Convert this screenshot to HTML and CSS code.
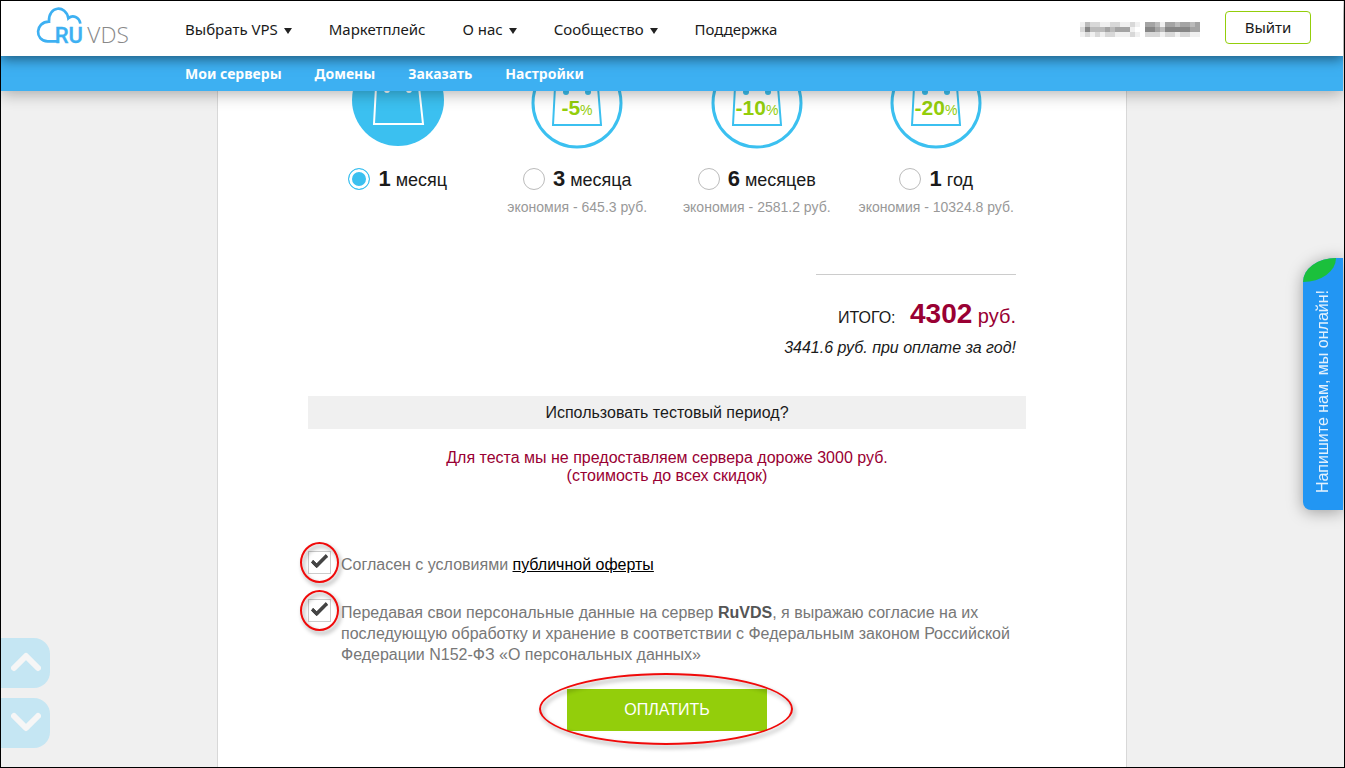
FILE: index.html
```html
<!DOCTYPE html>
<html lang="ru">
<head>
    <meta charset="UTF-8">
    <meta name="viewport" content="width=device-width, initial-scale=1.0">
    <title>RuVDS</title>
    <link rel="stylesheet" href="styles.css">
</head>
<body>

<header class="header">
    <a class="logo" href="#" aria-label="RuVDS">
        <svg width="95" height="50" viewBox="111 0 285 150">
            <path d="M172 121H143C103 120 105 62 147 62C144 14 198 10 205 52C218 40 238 48 241 68" fill="none" stroke="#3db0f2" stroke-width="8"/>
            <text class="logo-ru" x="164" y="125">RU</text>
            <text class="logo-vds" x="262" y="125">VDS</text>
        </svg>
    </a>
    <nav class="main-nav">
        <a class="drop" href="#">Выбрать VPS</a>
        <a href="#">Маркетплейс</a>
        <a class="drop" href="#">О нас</a>
        <a class="drop" href="#">Сообщество</a>
        <a href="#">Поддержка</a>
    </nav>
    <!-- скрытый баланс -->
    <svg class="balance" width="120" height="15" viewBox="0 0 24 3" shape-rendering="crispEdges">
        <path fill="#f0f0f0" d="M0 0h1v1h-1zM4 0h6v1h-6zM11 0h1v1h-1zM16 0h1v1h-1zM10 1h1v1h-1zM0 2h1v1h-1zM2 2h1v1h-1zM4 2h1v1h-1zM7 2h3v1h-3zM11 2h1v1h-1zM16 2h1v1h-1zM19 2h1v1h-1zM22 2h2v1h-2z"/>
        <path fill="#d8d8d8" d="M2 0h2v1h-2zM6 0h2v1h-2zM10 0h1v1h-1zM0 1h1v1h-1zM1 2h1v1h-1zM3 2h1v1h-1zM5 2h2v1h-2zM10 2h1v1h-1zM13 2h3v1h-3zM17 2h2v1h-2zM20 2h2v1h-2z"/>
        <path fill="#bbb" d="M1 0h1v1h-1zM15 0h1v1h-1zM19 0h1v1h-1zM22 0h1v1h-1zM2 1h3v1h-3zM6 1h1v1h-1zM16 1h1v1h-1z"/>
        <path fill="#a4a4a4" d="M13 0h2v1h-2zM17 0h2v1h-2zM20 0h2v1h-2zM23 0h1v1h-1zM5 1h1v1h-1zM7 1h3v1h-3zM15 1h1v1h-1zM22 1h2v1h-2z"/>
        <path fill="#868686" d="M1 1h1v1h-1zM13 1h2v1h-2zM17 1h5v1h-5z"/>
    </svg>
    <button class="logout" type="button">Выйти</button>
</header>

<nav class="sub-nav">
    <a href="#">Мои серверы</a>
    <a href="#">Домены</a>
    <a href="#">Заказать</a>
    <a href="#">Настройки</a>
</nav>

<main class="panel">
    <form>
        <!-- период оплаты -->
        <div class="plans">
            <div class="plan">
                <svg width="96" height="60" viewBox="0 0 96 60">
                    <circle cx="48" cy="9" r="46" fill="#3bc0f0"/>
                    <path d="M26 -4L24 33H73L69 -4" fill="none" stroke="#fff" stroke-width="2"/>
                    <circle cx="37" cy="-1" r="3" fill="#fff"/>
                    <circle cx="59" cy="-1" r="3" fill="#fff"/>
                </svg>
                <label class="period"><input type="radio" name="period" checked><span><b>1</b> месяц</span></label>
            </div>
            <div class="plan">
                <svg width="96" height="60" viewBox="0 0 96 60">
                    <circle cx="48" cy="12" r="44" fill="none" stroke="#3bc0f0" stroke-width="3"/>
                    <path d="M26 -4L24 34H72L69 -4" fill="none" stroke="#3bc0f0" stroke-width="2"/>
                    <circle cx="37" cy="1" r="3" fill="#3bc0f0"/>
                    <circle cx="59" cy="1" r="3" fill="#3bc0f0"/>
                    <text class="discount" x="48" y="24">-5<tspan class="percent">%</tspan></text>
                </svg>
                <label class="period"><input type="radio" name="period"><span><b>3</b> месяца</span></label>
                <div class="saving">экономия - 645.3 руб.</div>
            </div>
            <div class="plan">
                <svg width="96" height="60" viewBox="0 0 96 60">
                    <circle cx="48" cy="12" r="44" fill="none" stroke="#3bc0f0" stroke-width="3"/>
                    <path d="M26 -4L24 34H72L69 -4" fill="none" stroke="#3bc0f0" stroke-width="2"/>
                    <circle cx="37" cy="1" r="3" fill="#3bc0f0"/>
                    <circle cx="59" cy="1" r="3" fill="#3bc0f0"/>
                    <text class="discount" x="48" y="24">-10<tspan class="percent">%</tspan></text>
                </svg>
                <label class="period"><input type="radio" name="period"><span><b>6</b> месяцев</span></label>
                <div class="saving">экономия - 2581.2 руб.</div>
            </div>
            <div class="plan">
                <svg width="96" height="60" viewBox="0 0 96 60">
                    <circle cx="48" cy="12" r="44" fill="none" stroke="#3bc0f0" stroke-width="3"/>
                    <path d="M26 -4L24 34H72L69 -4" fill="none" stroke="#3bc0f0" stroke-width="2"/>
                    <circle cx="37" cy="1" r="3" fill="#3bc0f0"/>
                    <circle cx="59" cy="1" r="3" fill="#3bc0f0"/>
                    <text class="discount" x="48" y="24">-20<tspan class="percent">%</tspan></text>
                </svg>
                <label class="period"><input type="radio" name="period"><span><b>1</b> год</span></label>
                <div class="saving">экономия - 10324.8 руб.</div>
            </div>
        </div>

        <!-- итог -->
        <div class="total">
            <div class="sum">ИТОГО: <span class="price"><b>4302</b> руб.</span></div>
            <div class="year">3441.6 руб. при оплате за год!</div>
        </div>

        <div class="test-title">Использовать тестовый период?</div>
        <p class="test-note">Для теста мы не предоставляем сервера дороже 3000 руб.<br>(стоимость до всех скидок)</p>

        <!-- согласие -->
        <div class="agree">
            <span class="mark"><input type="checkbox" id="offer" checked></span>
            <label for="offer">Согласен с условиями <a href="#">публичной оферты</a></label>
        </div>
        <div class="agree">
            <span class="mark"><input type="checkbox" id="personal" checked></span>
            <label for="personal">Передавая свои персональные данные на сервер <b>RuVDS</b>, я выражаю согласие на их последующую обработку и хранение в соответствии с Федеральным законом Российской Федерации N152-ФЗ «О персональных данных»</label>
        </div>

        <div class="pay"><button type="button">ОПЛАТИТЬ</button></div>
    </form>
</main>

<button class="chat" type="button"><span>Напишите нам, мы онлайн!</span></button>

<div class="scroll">
    <button type="button" aria-label="Вверх">
        <svg width="30" height="20" viewBox="0 0 30 20"><path d="M3 16L15 4L27 16"/></svg>
    </button>
    <button type="button" aria-label="Вниз">
        <svg width="30" height="20" viewBox="0 0 30 20"><path d="M3 4L15 16L27 4"/></svg>
    </button>
</div>

</body>
</html>
```
FILE: styles.css
```css
* {
    box-sizing: border-box;
}
body {
    margin: 0;
    min-height: 100vh;
    display: flex;
    flex-direction: column;
    position: relative;
    padding-right: 1px;
    border: 1px solid #000;
    background-color: #f0f0f0;
    font-family: "Liberation Sans", Arial, sans-serif;
    font-size: 16px;
    color: #1a1a1a;
}
button {
    border: none;
    padding: 0;
    font-family: inherit;
    cursor: pointer;
}

/* header */
.header {
    display: flex;
    align-items: center;
    height: 55px;
    padding: 0 32px 0 36px;
    background-color: #fff;
    box-shadow: 0 3px 12px rgba(0, 0, 0, 0.5);
    z-index: 3;
    font-family: "Noto Sans", sans-serif;
}
.logo {
    width: 148px;
    height: 50px;
    margin-bottom: 6px;
}
.logo svg {
    display: block;
    overflow: visible;
}
.logo-ru {
    font: 500 66px Roboto, sans-serif;
    fill: #3db0f2;
    stroke: #3db0f2;
    stroke-width: 1px;
}
.logo-vds {
    font: 300 68px "Open Sans", sans-serif;
    fill: #888;
}
.main-nav {
    display: flex;
    gap: 37px;
    flex: 1;
}
.main-nav a {
    font-size: 15px;
    color: #1a1a1a;
    text-decoration: none;
}
.drop::after {
    content: "";
    display: inline-block;
    margin-left: 6px;
    vertical-align: 1px;
    border: 4px solid transparent;
    border-top: 6px solid #222;
    border-bottom: none;
}
.balance {
    margin: 2px 25px 0 0;
}
.logout {
    width: 86px;
    height: 33px;
    margin-bottom: 2px;
    padding-bottom: 2px;
    background-color: #fff;
    border: 1px solid #93ce0b;
    border-radius: 4px;
    font-size: 15px;
    color: #1a1a1a;
}
.sub-nav {
    display: flex;
    align-items: center;
    gap: 33px;
    height: 35px;
    padding-left: 184px;
    background-color: #3db0f2;
    box-shadow: 0 3px 16px rgba(0, 0, 0, 0.3);
    z-index: 2;
}
.sub-nav a {
    font: bold 14px "Noto Sans", sans-serif;
    color: #fff;
    text-decoration: none;
}

/* panel */
.panel {
    flex: 1;
    width: 100%;
    max-width: 910px;
    margin: 0 auto;
    padding: 0 100px 20px 90px;
    background-color: #fff;
    border: 1px solid #d8d8d8;
    border-width: 0 1px;
}
.plans {
    display: grid;
    grid-template-columns: repeat(4, 1fr);
    text-align: center;
}
.plan svg {
    display: block;
    margin: 0 auto 12px;
}
.discount {
    font-size: 21px;
    font-weight: bold;
    text-anchor: middle;
    fill: #93ce0b;
}
.percent {
    font-size: 14px;
    font-weight: normal;
}
.period {
    display: flex;
    justify-content: center;
    align-items: center;
    gap: 8px;
    height: 32px;
    font-size: 18px;
}
.period b {
    font-size: 22px;
}
.period input {
    appearance: none;
    width: 22px;
    height: 22px;
    margin: 0;
    border: 1px solid #bbb;
    border-radius: 50%;
}
.period input:checked {
    border-color: #3bc0f0;
    background-color: #3bc0f0;
    box-shadow: inset 0 0 0 3px #fff;
}
.saving {
    margin-top: 2px;
    font-size: 14px;
    line-height: 20px;
    color: #999;
    white-space: nowrap;
}

/* total */
.total {
    width: fit-content;
    margin: 57px 10px 38px auto;
    text-align: right;
}
.total::before {
    content: "";
    display: block;
    width: 200px;
    margin: 0 0 23px auto;
    border-top: 1px solid #ccc;
}
.sum {
    line-height: 32px;
}
.price {
    margin-left: 10px;
    font-size: 20px;
    color: #990033;
}
.price b {
    font-size: 28px;
}
.year {
    margin-top: 4px;
    line-height: 20px;
    font-style: italic;
}
.test-title {
    background-color: #f0f0f0;
    line-height: 33px;
    text-align: center;
}
.test-note {
    margin: 20px 0 66px;
    line-height: 18px;
    text-align: center;
    color: #990033;
}

/* agreement */
.agree {
    display: flex;
    align-items: flex-start;
    gap: 10px;
    margin-bottom: 24px;
    line-height: 21px;
    color: #777;
}
.agree label {
    max-width: 670px;
    padding-top: 3px;
}
.agree a {
    color: #000;
}
.agree b {
    color: #555;
}
.mark {
    position: relative;
    height: 23px;
}
.mark input {
    appearance: none;
    display: block;
    width: 23px;
    height: 23px;
    margin: 0;
    border: 1px solid #ccc;
}
.mark input:checked::after {
    content: "";
    display: block;
    box-sizing: border-box;
    width: 9px;
    height: 17px;
    margin: -1px 0 0 6px;
    border: solid #444;
    border-width: 0 4px 4px 0;
    border-radius: 2px;
    transform: rotate(45deg);
}
/* red outlines */
.mark::after,
.pay::after {
    content: "";
    position: absolute;
    inset: -9px -8px;
    border: 2px solid #f00a0a;
    border-radius: 50%;
    filter: drop-shadow(2px 3px 2px rgba(0, 0, 0, 0.4));
    pointer-events: none;
}
.pay {
    position: relative;
    width: 200px;
    margin: 0 auto;
}
.pay::after {
    inset: -16px -26px -14px -28px;
}
.pay button {
    display: block;
    width: 100%;
    height: 42px;
    background-color: #93ce0b;
    font-size: 16px;
    color: #fff;
}

/* side widgets */
.chat {
    position: absolute;
    top: 257px;
    right: 1px;
    width: 40px;
    height: 252px;
    background-color: #2296f3;
    border-radius: 33px 0 0 8px / 24px 0 0 8px;
    box-shadow: 0 2px 16px rgba(0, 0, 0, 0.35);
    font-size: 16px;
    color: #e4f1fd;
}
.chat::before {
    content: "";
    position: absolute;
    top: 0;
    left: 0;
    width: 33px;
    height: 24px;
    background-color: #1bc03c;
    border-radius: 100% 0;
}
.chat span {
    display: inline-block;
    padding-bottom: 20px;
    writing-mode: vertical-rl;
    transform: rotate(180deg);
}
.scroll {
    position: absolute;
    left: 0;
    bottom: 19px;
    display: grid;
    gap: 10px;
}
.scroll button {
    width: 49px;
    height: 50px;
    background-color: #c5e6f3;
    border-radius: 0 16px 16px 0;
}
.scroll path {
    fill: none;
    stroke: #f6f6f6;
    stroke-width: 6;
    stroke-linecap: round;
    stroke-linejoin: round;
}
```
